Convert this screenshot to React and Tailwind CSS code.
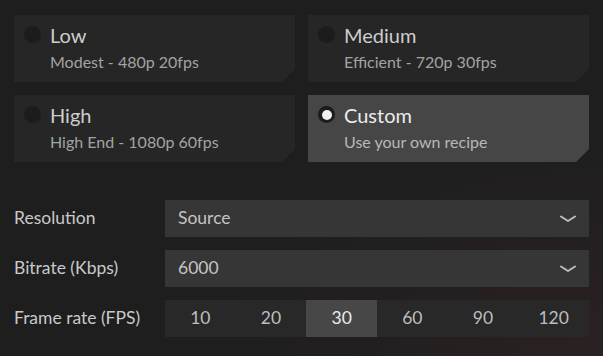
const presets = [
  { name: "Low", desc: "Modest - 480p 20fps" },
  { name: "Medium", desc: "Efficient - 720p 30fps" },
  { name: "High", desc: "High End - 1080p 60fps" },
  { name: "Custom", desc: "Use your own recipe", active: true },
];

const fps = [10, 20, 30, 60, 90, 120];

const Chevron = () => (
  <svg width="16" height="8" viewBox="0 0 16 8" className="text-[#bdbdbd]">
    <path d="M1 1.5 L8 6 L15 1.5" fill="none" stroke="currentColor" strokeWidth="2" strokeLinecap="round" strokeLinejoin="round" />
  </svg>
);

const App = () => {
  return (
    <div
      className="w-[603px] h-[356px] overflow-hidden bg-[#1e1e1e] bg-[radial-gradient(ellipse_at_100%_100%,#33232599_0%,#1e1e1e00_45%)] px-[14px] pt-[15px] text-[#cfcfcf]"
      style={{ fontFamily: "Lato, 'Open Sans', sans-serif" }}
    >
      <div className="grid grid-cols-2 gap-x-[13px] gap-y-[13px]">
        {presets.map((p) => (
          <div
            key={p.name}
            className={
              "h-[67px] flex gap-[9px] pl-[10px] pt-[11px] [clip-path:polygon(0_0,100%_0,100%_calc(100%-13px),calc(100%-13px)_100%,0_100%)] " +
              (p.active ? "bg-[#464646]" : "bg-[#262626]")
            }
          >
            <div className="w-[17px] h-[17px] rounded-full bg-[#1c1c1c] flex items-center justify-center shrink-0">
              {p.active && <div className="w-[10px] h-[10px] rounded-full bg-[#f0f0f0]" />}
            </div>
            <div className="-mt-[3px]">
              <div className={"text-[20px] leading-[24px] " + (p.active ? "text-[#ececec]" : "text-[#cdcdcd]")}>
                {p.name}
              </div>
              <div className={"text-[16px] leading-[20px] mt-[5px] " + (p.active ? "text-[#b8b8b8]" : "text-[#a3a3a3]")}>
                {p.desc}
              </div>
            </div>
          </div>
        ))}
      </div>

      <div className="mt-[38px] flex flex-col gap-[13px] text-[17.5px]">
        <div className="flex items-center">
          <div className="w-[151px] text-[#c9c9c9]">Resolution</div>
          <div className="flex-1 h-[37px] bg-[#363636] flex items-center justify-between pl-[13px] pr-[13px] text-[#c4c4c4]">
            <span>Source</span>
            <Chevron />
          </div>
        </div>
        <div className="flex items-center">
          <div className="w-[151px] text-[#c9c9c9]">Bitrate (Kbps)</div>
          <div className="flex-1 h-[37px] bg-[#363636] flex items-center justify-between pl-[13px] pr-[13px] text-[#c4c4c4]">
            <span>6000</span>
            <Chevron />
          </div>
        </div>
        <div className="flex items-center">
          <div className="w-[151px] text-[#c9c9c9]">Frame rate (FPS)</div>
          <div className="flex-1 h-[37px] bg-[#282828] grid grid-cols-6">
            {fps.map((f) => (
              <div
                key={f}
                className={
                  "flex items-center justify-center " +
                  (f === 30 ? "bg-[#474747] text-[#ececec]" : "text-[#bdbdbd]")
                }
              >
                {f}
              </div>
            ))}
          </div>
        </div>
      </div>
    </div>
  );
};

export default App;
